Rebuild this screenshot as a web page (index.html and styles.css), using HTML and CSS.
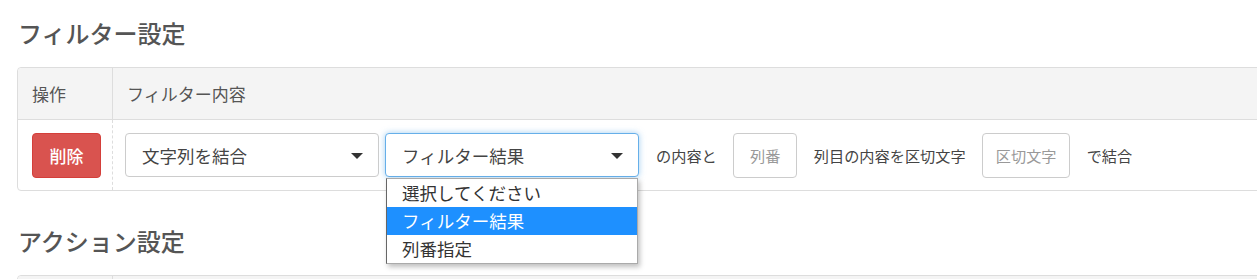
FILE: index.html
```html
<!DOCTYPE html>
<html lang="ja">
<head>
<meta charset="utf-8">
<title>フィルター設定</title>
<link rel="stylesheet" href="styles.css">
</head>
<body>
<div class="page">
  <section class="section">
    <h3 class="title">フィルター設定</h3>
    <div class="table">
      <div class="row head">
        <div class="cell c1">操作</div>
        <div class="cell c2">フィルター内容</div>
      </div>
      <div class="row body">
        <div class="cell c1"><button class="btn-del">削除</button></div>
        <div class="cell c2 inline">
          <div class="select"><span>文字列を結合</span><i class="caret"></i></div>
          <div class="select-wrap">
            <div class="select focus"><span>フィルター結果</span><i class="caret"></i></div>
            <ul class="dropdown">
              <li>選択してください</li>
              <li class="active">フィルター結果</li>
              <li>列番指定</li>
            </ul>
          </div>
          <span class="txt first">の内容と</span>
          <div class="input w-col">列番</div>
          <span class="txt">列目の内容を区切文字</span>
          <div class="input w-sep">区切文字</div>
          <span class="txt">で結合</span>
        </div>
      </div>
    </div>
  </section>
  <section class="section">
    <h3 class="title">アクション設定</h3>
    <div class="table">
      <div class="row head">
        <div class="cell c1"></div>
        <div class="cell c2"></div>
      </div>
    </div>
  </section>
</div>
</body>
</html>
```

FILE: styles.css
```css
html, body {
  margin: 0;
  padding: 0;
  background: #fff;
  overflow: hidden;
}
body {
  font-family: "Noto Sans CJK JP", "Noto Sans", sans-serif;
  color: #444;
}
.page {
  padding-left: 17px;
  width: 1340px;
}
.section {
  padding-bottom: 17px;
}
.title {
  margin: 0 0 0 1px;
  padding: 19px 0 21px;
  font-size: 24px;
  line-height: 27px;
  font-weight: 500;
  color: #555;
}
.table {
  border: 1px solid #ddd;
  border-radius: 4px;
}
.row {
  display: flex;
}
.head {
  background: #f4f4f4;
  height: 51px;
  border-bottom: 1px solid #ddd;
  border-radius: 4px 4px 0 0;
}
.head .cell {
  display: flex;
  align-items: center;
  font-size: 17px;
  color: #555;
}
.head .c1 {
  border-right: 1px solid #ddd;
}
.body {
  height: 70px;
}
.body .c1 {
  border-right: 1px dashed #ddd;
}
.cell {
  box-sizing: border-box;
}
.c1 {
  width: 95px;
  padding-left: 14px;
  display: flex;
  align-items: center;
}
.c2 {
  flex: 1;
  padding-left: 12px;
}
.head .c2 {
  padding-left: 14px;
}
.inline {
  display: flex;
  align-items: center;
}
.btn-del {
  width: 69px;
  height: 45px;
  background: #d9534f;
  border: 1px solid #d43f3a;
  border-radius: 4px;
  color: #fff;
  font-family: inherit;
  font-size: 17px;
  font-weight: 500;
  padding: 0;
}
.select {
  box-sizing: border-box;
  width: 254px;
  height: 44px;
  border: 1px solid #ccc;
  border-radius: 4px;
  display: flex;
  align-items: center;
  justify-content: space-between;
  padding: 0 15px 0 16px;
  font-size: 17.5px;
  color: #444;
  background: #fff;
}
.select-wrap {
  position: relative;
  margin-left: 6px;
}
.select.focus {
  border-color: #66afe9;
  box-shadow: 0 0 6px rgba(102, 175, 233, 0.6);
}
.caret {
  width: 0;
  height: 0;
  border-left: 6px solid transparent;
  border-right: 6px solid transparent;
  border-top: 6px solid #333;
  margin-top: 1px;
}
.dropdown {
  position: absolute;
  top: 45px;
  left: 1px;
  width: 252px;
  box-sizing: border-box;
  margin: 0;
  padding: 0;
  list-style: none;
  background: #fff;
  border: 1px solid #aaa;
  border-left-color: #666;
  box-shadow: 2px 3px 5px rgba(0, 0, 0, 0.25);
  z-index: 5;
}
.dropdown li {
  height: 28px;
  line-height: 28px;
  padding-left: 15px;
  font-size: 17.5px;
  color: #333;
}
.dropdown li.active {
  background: #1e90ff;
  color: #fff;
}
.txt {
  font-size: 15.2px;
  color: #444;
  margin: 0 16.5px;
}
.txt.first {
  margin-left: 17px;
}
.input {
  box-sizing: border-box;
  height: 45px;
  border: 1px solid #ccc;
  border-radius: 4px;
  display: flex;
  align-items: center;
  justify-content: center;
  font-size: 15.2px;
  color: #999;
}
.w-col {
  width: 64px;
}
.w-sep {
  width: 88px;
}
```
